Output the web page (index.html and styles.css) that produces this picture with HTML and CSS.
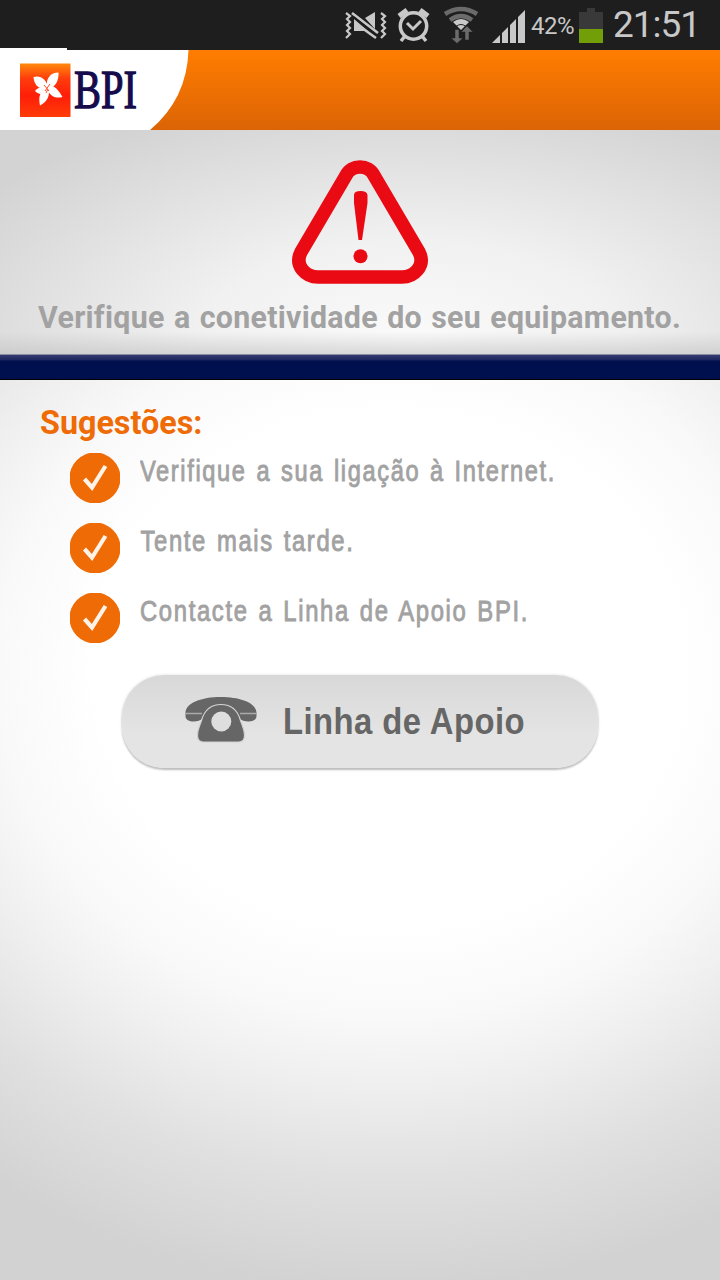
FILE: index.html
```
<!DOCTYPE html>
<html lang="pt">
<head>
    <meta charset="UTF-8">
    <title>BPI</title>
    <link rel="stylesheet" href="styles.css">
</head>
<body>
    <div class="status-bar">
        <svg class="status-icons" width="190" height="50" viewBox="340 0 190 50">
            <!-- vibrate / muted -->
            <g fill="none" stroke="#c8c8c8" stroke-width="2.2">
                <path d="M346 13l4 3-3 3 3 3-3 3 3 3-3 3 3 3-4 4"/>
                <path d="M381 13l4 3-3 3 3 3-3 3 3 3-3 3 3 3-4 4"/>
            </g>
            <path fill="#c8c8c8" d="M354 19l14 12h-14zM365 18l10-6v17z"/>
            <path d="M352 13l26 20M362 28l14 10" stroke="#c8c8c8" stroke-width="2.6"/>
            <path d="M354 17l22 18" stroke="#1e1e1e" stroke-width="1.3"/>
            <!-- alarm -->
            <g fill="none" stroke="#c8c8c8">
                <circle cx="413.500" cy="26" r="13.200" stroke-width="3.500"/>
                <path d="M407 23l6 6 8-8" stroke-width="3"/>
                <path d="M399 16l8-6M428 16l-8-6" stroke-width="5"/>
                <path d="M405 36l-4 5M422 36l4 5" stroke-width="3.500"/>
            </g>
            <!-- wifi -->
            <g fill="none" stroke="#6b6b6b" stroke-width="4.500">
                <path d="M445 14q16-10 32 0"/>
                <path d="M450 20q11-8 22 0"/>
            </g>
            <path d="M453 22q8-6 16 0l-8 8z" fill="#c8c8c8"/>
            <path d="M456 26.500q5-4 10 0" fill="none" stroke="#1e1e1e"/>
            <path d="M455 29.500h4V38h4l-6 5.500-6-5.500h4zM467 26l6 6h-4v8h-4v-8h-4z" fill="#6b6b6b" stroke="#1e1e1e" stroke-width=".5"/>
            <!-- signal -->
            <path fill="#c8c8c8" d="M492 43l8-8v8zM502 33l6-6v16h-6zM510 25l6-6v24h-6zM518 17l7-7v33h-7z"/>
        </svg>
        <span class="battery-text">42%</span>
        <div class="battery"></div>
        <span class="clock">21:51</span>
    </div>

    <header class="header">
        <svg class="logo" width="190" height="82" viewBox="0 48 190 82">
            <defs>
                <linearGradient id="flame" x1="0" y1="0" x2="0" y2="1">
                    <stop offset="0" stop-color="#ff8a0c"/>
                    <stop offset=".28" stop-color="#ff3d0c"/>
                    <stop offset=".6" stop-color="#ff1e08"/>
                    <stop offset="1" stop-color="#ff3c08"/>
                </linearGradient>
            </defs>
            <path fill="#fff" d="M0 48h67v2h121.500Q187 99 150 130H0z"/>
            <rect x="20" y="63.500" width="50.500" height="53.500" fill="url(#flame)"/>
            <g fill="#fff">
                <path d="M33.500 77c7-2 13 2 14.500 11-7 3-14-2-14.500-11z"/>
                <path d="M58.500 72.500c-8 0-13 6-11.500 15 8 2 12-7 11.500-15z"/>
                <path d="M47 87c7-4 12 4 15.500 10-7 2-14-1-15.500-10z"/>
                <path d="M48 87c3 8-1 15-8 18.500-2-9 0-15 8-18.500z"/>
                <path d="M47 87c-5-1-10 1-12 4 4 4 9 4 13-1z"/>
            </g>
            <path d="M44 85l5 6M50 84l-5 7M46 93l2-4" stroke="#ff4a20" stroke-width="1"/>
            <text class="logo-text" x="74" y="107.500" textLength="63" lengthAdjust="spacingAndGlyphs">BPI</text>
        </svg>
    </header>

    <section class="alert">
        <svg class="alert-icon" width="138" height="126" viewBox="291 160 138 126">
            <path fill="none" stroke="#e90a13" stroke-width="13.500" d="M346 175.500C351 164 369 164 374 175.500L419 252C426 266 414 277 402 277H318C306 277 294 266 301 252Z"/>
            <path fill="#e90a13" d="M354 195q0-4 6.500-4t7 4v8L362 240h-3.500L354 203z"/>
            <circle cx="360.500" cy="256.300" r="7" fill="#e90a13"/>
        </svg>
        <h1>
            <svg width="720" height="50" viewBox="0 290 720 50">
                <text x="38" y="328" textLength="643" lengthAdjust="spacingAndGlyphs">Verifique a conetividade do seu equipamento.</text>
            </svg>
        </h1>
    </section>
    <div class="divider"></div>

    <main class="content">
        <h2>Sugestões:</h2>
        <ul class="tips">
            <li>
                <svg class="check" viewBox="0 0 50 50"><circle cx="25" cy="25" r="25.500"/><path d="M14.500 26l7.500 8.500L35.500 13"/></svg>
                <svg class="tip-text" viewBox="0 0 560 50"><text x="0" y="28" textLength="416" lengthAdjust="spacingAndGlyphs">Verifique a sua ligação à Internet.</text></svg>
            </li>
            <li>
                <svg class="check" viewBox="0 0 50 50"><circle cx="25" cy="25" r="25.500"/><path d="M14.500 26l7.500 8.500L35.500 13"/></svg>
                <svg class="tip-text" viewBox="0 0 560 50"><text x="0.500" y="28" textLength="214" lengthAdjust="spacingAndGlyphs">Tente mais tarde.</text></svg>
            </li>
            <li>
                <svg class="check" viewBox="0 0 50 50"><circle cx="25" cy="25" r="25.500"/><path d="M14.500 26l7.500 8.500L35.500 13"/></svg>
                <svg class="tip-text" viewBox="0 0 560 50"><text x="0" y="28" textLength="389" lengthAdjust="spacingAndGlyphs">Contacte a Linha de Apoio BPI.</text></svg>
            </li>
        </ul>
        <button class="support-btn" aria-label="Linha de Apoio">
            <svg width="476" height="93" viewBox="122 675 476 93">
                <path fill="#666" d="M185.500 713c0-10 16-16 35.500-16s35.500 6 35.500 16v3c0 4-4 5.500-8 5.500s-7-1-9-3q-7-13-18.500-13t-18.500 13c-2 2-5 3-9 3s-8-1.500-8-5.500z"/>
                <path d="M185 713.500h17M240 713.500h17" stroke="#aaa" stroke-width="1.300"/>
                <path fill="#666" stroke="#d2d2d2" stroke-width="1.200" d="M221 704.500c12 0 17 7 19.500 16 2 6 4 9 4 15 0 4-2 6.500-6 6.500h-35c-4 0-6-2.500-6-6.500 0-6 2-9 4-15 2.500-9 7.500-16 19.500-16z"/>
                <circle cx="221.300" cy="721.500" r="10" fill="#dedede"/>
                <text x="283" y="734" textLength="242" lengthAdjust="spacingAndGlyphs">Linha de Apoio</text>
            </svg>
        </button>
    </main>
</body>
</html>
```
FILE: styles.css
```
* {
    box-sizing: border-box;
}
body {
    margin: 0;
    width: 720px;
    height: 1280px;
    display: flex;
    flex-direction: column;
    overflow: hidden;
    font-family: Roboto, Arial, sans-serif;
    background: #fff;
}
svg {
    display: block;
}
.status-bar {
    height: 50px;
    flex: none;
    display: flex;
    justify-content: flex-end;
    align-items: center;
    padding-right: 21px;
    background: #1e1e1e;
    color: #c8c8c8;
}
.battery-text {
    width: 49px;
    padding-left: 1px;
    font-size: 24px;
    line-height: 50px;
    padding-top: 1px;
    letter-spacing: -0.5px;
}
.battery {
    width: 24px;
    height: 35px;
    margin-right: 10px;
    background: linear-gradient(#393939, #393939) 8px 0 / 8px 4px no-repeat,
                linear-gradient(#393939 17px, #729f08 17px) 0 4px / 24px 31px no-repeat;
}
.clock {
    width: 86px;
    font-size: 37px;
    line-height: 50px;
    letter-spacing: -1px;
    white-space: nowrap;
}
.header {
    height: 80px;
    flex: none;
    background: linear-gradient(#ff7d00, #dc6405);
}
.logo {
    margin-top: -2px;
    position: relative;
}
.logo-text {
    font-family: "Liberation Serif", serif;
    font-size: 55px;
    fill: #160c4c;
    stroke: #160c4c;
    stroke-width: 1.3px;
}
.alert {
    height: 224px;
    flex: none;
    padding-top: 30px;
    background: linear-gradient(transparent 90%, rgba(190, 190, 190, 0.55)),
                radial-gradient(ellipse 520px 250px at 410px 210px, #fafafa 0%, #f1f1f1 40%, #d3d3d3 100%);
}
.alert-icon {
    margin: 0 auto;
}
h1 {
    margin: 4px 0 0;
}
h1 text {
    font-family: Roboto, Arial, sans-serif;
    font-size: 32px;
    font-weight: 700;
    letter-spacing: 0.3px;
    word-spacing: 1.5px;
    fill: #a2a2a2;
}
.divider {
    height: 26px;
    flex: none;
    border-top: 1px solid #8b8da2;
    border-bottom: 1px solid #000;
    background: linear-gradient(#343b70, #1d265f 5px, #000f4e 6px, #000f4e);
}
.content {
    flex: 1;
    background: radial-gradient(ellipse 700px 620px at 390px 290px, #fff 0%, #fff 42%, #f9f9f9 56%, #f0f0f0 66%, #e0e0e0 82%, #d2d2d2 100%);
}
h2 {
    margin: 0;
    padding: 23px 0 0 40px;
    font-size: 32.3px;
    line-height: 40px;
    font-weight: 700;
    color: #ee6b06;
}
.tips {
    list-style: none;
    margin: 10px 0 0;
    padding: 0 0 0 70px;
    display: flex;
    flex-direction: column;
    gap: 20px;
}
.tips li {
    display: flex;
    gap: 20px;
}
.check {
    width: 50px;
    height: 50px;
    fill: #ee6b06;
}
.check path {
    fill: none;
    stroke: #fff3e8;
    stroke-width: 4.2;
}
.tip-text {
    width: 560px;
    height: 50px;
    font-family: "Liberation Sans", Arial, sans-serif;
    font-size: 29px;
    letter-spacing: 2px;
    word-spacing: 2px;
    fill: #a2a2a2;
    stroke: #a2a2a2;
    stroke-width: 0.9px;
}
.support-btn {
    display: block;
    width: 476px;
    height: 93px;
    margin: 32px auto 0;
    padding: 0;
    border: none;
    border-radius: 42px;
    background: linear-gradient(#d8d8d8, #e4e4e4 65%, #e4e4e4);
    box-shadow: 0 2px 2px #bdbdbd, 0 0 3px #ddd;
}
.support-btn text {
    font-family: "Liberation Sans", Arial, sans-serif;
    font-size: 37px;
    font-weight: 700;
    letter-spacing: 0.5px;
    fill: #666;
}
```
